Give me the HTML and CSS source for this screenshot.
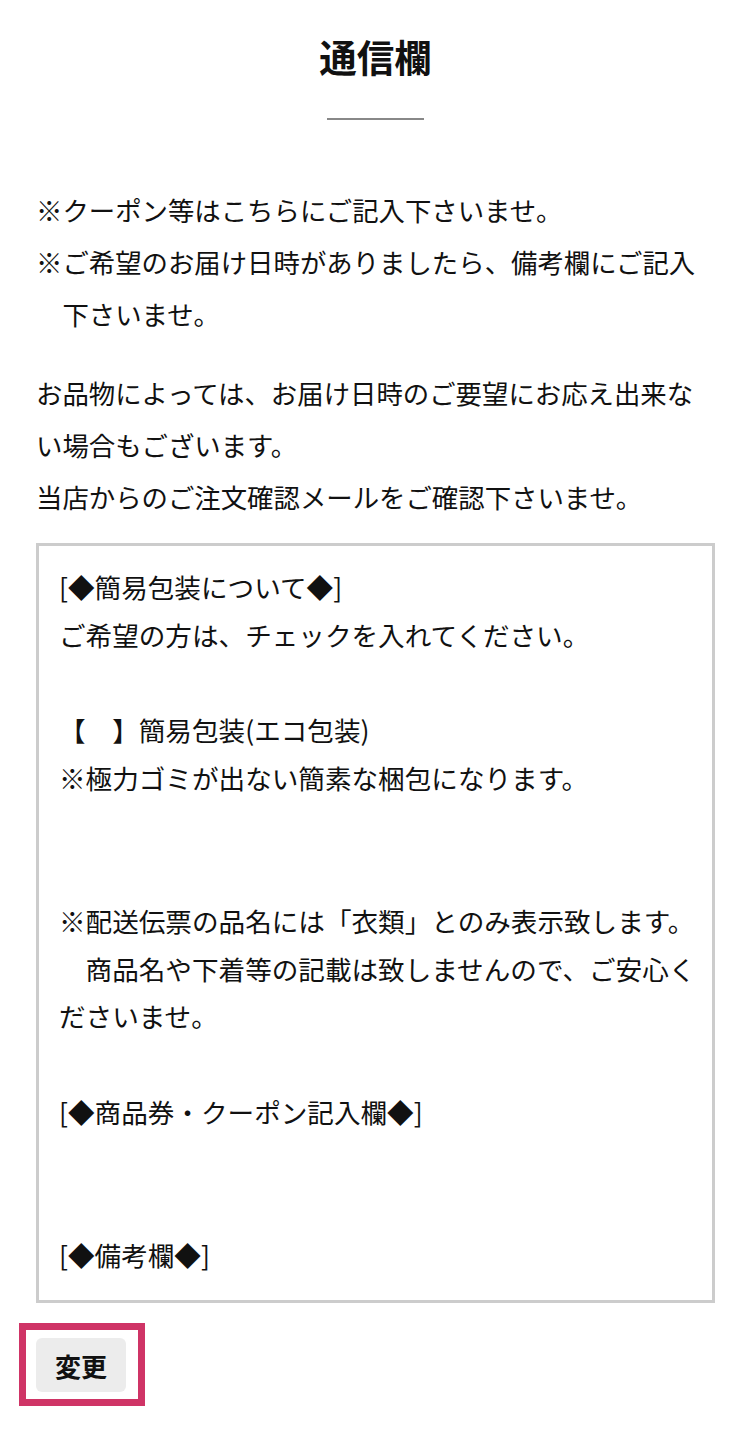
FILE: index.html
```html
<!DOCTYPE html>
<html lang="ja">
<head>
<meta charset="utf-8">
<title>通信欄</title>
<link rel="stylesheet" href="styles.css">
</head>
<body>
<div class="page">
  <h1 class="title">通信欄</h1>
  <div class="divider"></div>
  <div class="notes">
    <p class="note">※クーポン等はこちらにご記入下さいませ。</p>
    <p class="note">※ご希望のお届け日時がありましたら、備考欄にご記入下さいませ。</p>
  </div>
  <p class="info">お品物によっては、お届け日時のご要望にお応え出来ない場合もございます。<br>当店からのご注文確認メールをご確認下さいませ。</p>
  <div class="memo">[◆簡易包装について◆]
ご希望の方は、チェックを入れてください。

【　】簡易包装(エコ包装)
※極力ゴミが出ない簡素な梱包になります。


※配送伝票の品名には「衣類」とのみ表示致します。
　商品名や下着等の記載は致しませんので、ご安心くださいませ。

[◆商品券・クーポン記入欄◆]


[◆備考欄◆]</div>
  <div class="highlight"><button class="btn" type="button">変更</button></div>
</div>
</body>
</html>
```
FILE: styles.css
```css
html, body {
  margin: 0;
  padding: 0;
  background: #fff;
}
body {
  font-family: "Noto Sans CJK JP", "Noto Sans", sans-serif;
  color: #111;
}
.page {
  width: 750px;
  box-sizing: border-box;
  padding: 31px 35px 0 36px;
}
.title {
  margin: 0;
  font-size: 37.5px;
  font-weight: 700;
  line-height: 50px;
  text-align: center;
}
.divider {
  width: 97px;
  height: 2px;
  background: #888;
  margin: 37px auto 0;
}
.notes {
  margin-top: 64px;
}
.note {
  margin: 0;
  font-size: 26.4px;
  line-height: 52px;
  padding-left: 1em;
  text-indent: -1em;
}
.info {
  margin: 27px 0 0;
  font-size: 26.4px;
  line-height: 52px;
}
.memo {
  margin-top: 20px;
  box-sizing: border-box;
  width: 679px;
  height: 760px;
  border: 3px solid #cccccc;
  padding: 17px 12px 0 20px;
  font-size: 26.6px;
  line-height: 47.7px;
  white-space: pre-wrap;
  overflow: hidden;
}
.highlight {
  display: inline-block;
  margin: 20px 0 0 -17px;
  border: 7px solid #cf3466;
  padding: 8px 12px 7px 10px;
}
.btn {
  display: block;
  width: 90px;
  height: 54px;
  border: none;
  border-radius: 6px;
  background: #ececec;
  font-family: "Noto Sans CJK JP", sans-serif;
  font-size: 26px;
  font-weight: 700;
  color: #111;
  padding: 0;
}
```
